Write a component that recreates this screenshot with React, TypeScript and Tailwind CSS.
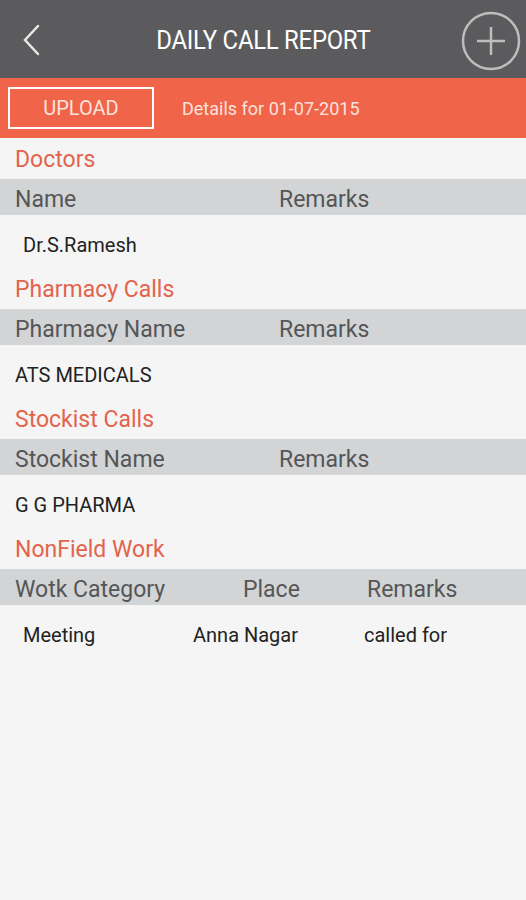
import React from "react";

const font = { fontFamily: "Roboto, 'Noto Sans', sans-serif" };

function Section({
  title,
  headers,
  rows,
}: {
  title: string;
  headers: { label: string; x: string }[];
  rows: { label: string; x: string }[];
}) {
  return (
    <div>
      <div className="h-[41px] flex items-end pb-[8px] pl-[15px] text-[23px] leading-none text-[#e4634c]">
        {title}
      </div>
      <div className="h-[36px] bg-[#d3d4d5] relative text-[23px] text-[#555657] leading-[36px]">
        {headers.map((h) => (
          <span key={h.label} className={`absolute top-[3px] ${h.x}`}>
            {h.label}
          </span>
        ))}
      </div>
      <div className="h-[53px] relative text-[20px] text-[#222222] leading-none">
        {rows.map((r) => (
          <span key={r.label} className={`absolute top-[20px] ${r.x}`}>
            {r.label}
          </span>
        ))}
      </div>
    </div>
  );
}

export default function App() {
  return (
    <div className="w-[526px] h-[900px] bg-[#f5f5f5] overflow-hidden" style={font}>
      <div className="h-[78px] bg-[#5b5b5d] relative flex items-center justify-center">
        <svg className="absolute left-[20px] top-[24px]" width="22" height="32" viewBox="0 0 22 32">
          <path d="M18 2 L5 16 L18 30" fill="none" stroke="#e8e8e8" strokeWidth="2.5" strokeLinecap="round" />
        </svg>
        <span
          className="text-[26px] text-white tracking-[-0.3px] leading-none mt-[2px]"
          style={{ transform: "scaleX(0.92)" }}
        >
          DAILY CALL REPORT
        </span>
        <svg className="absolute left-[461px] top-[11px]" width="60" height="60" viewBox="0 0 60 60">
          <circle cx="30" cy="30" r="28" fill="none" stroke="#bdbdbd" strokeWidth="2.5" />
          <path d="M30 16 V44 M16 30 H44" stroke="#bdbdbd" strokeWidth="2.5" />
        </svg>
      </div>
      <div className="h-[60px] bg-[#f0644a] flex items-center">
        <div className="ml-[8px] w-[146px] h-[42px] border-2 border-white flex items-center justify-center text-[20px] text-[#fbe2dc]">
          UPLOAD
        </div>
        <div className="ml-[28px] text-[18px] text-[#fbe2dc]">Details for 01-07-2015</div>
      </div>
      <Section
        title="Doctors"
        headers={[
          { label: "Name", x: "left-[15px]" },
          { label: "Remarks", x: "left-[279px]" },
        ]}
        rows={[{ label: "Dr.S.Ramesh", x: "left-[23px]" }]}
      />
      <Section
        title="Pharmacy Calls"
        headers={[
          { label: "Pharmacy Name", x: "left-[15px]" },
          { label: "Remarks", x: "left-[279px]" },
        ]}
        rows={[{ label: "ATS MEDICALS", x: "left-[15px]" }]}
      />
      <Section
        title="Stockist Calls"
        headers={[
          { label: "Stockist Name", x: "left-[15px]" },
          { label: "Remarks", x: "left-[279px]" },
        ]}
        rows={[{ label: "G G PHARMA", x: "left-[15px]" }]}
      />
      <Section
        title="NonField Work"
        headers={[
          { label: "Wotk Category", x: "left-[15px]" },
          { label: "Place", x: "left-[243px]" },
          { label: "Remarks", x: "left-[367px]" },
        ]}
        rows={[
          { label: "Meeting", x: "left-[23px]" },
          { label: "Anna Nagar", x: "left-[193px]" },
          { label: "called for", x: "left-[364px]" },
        ]}
      />
    </div>
  );
}
